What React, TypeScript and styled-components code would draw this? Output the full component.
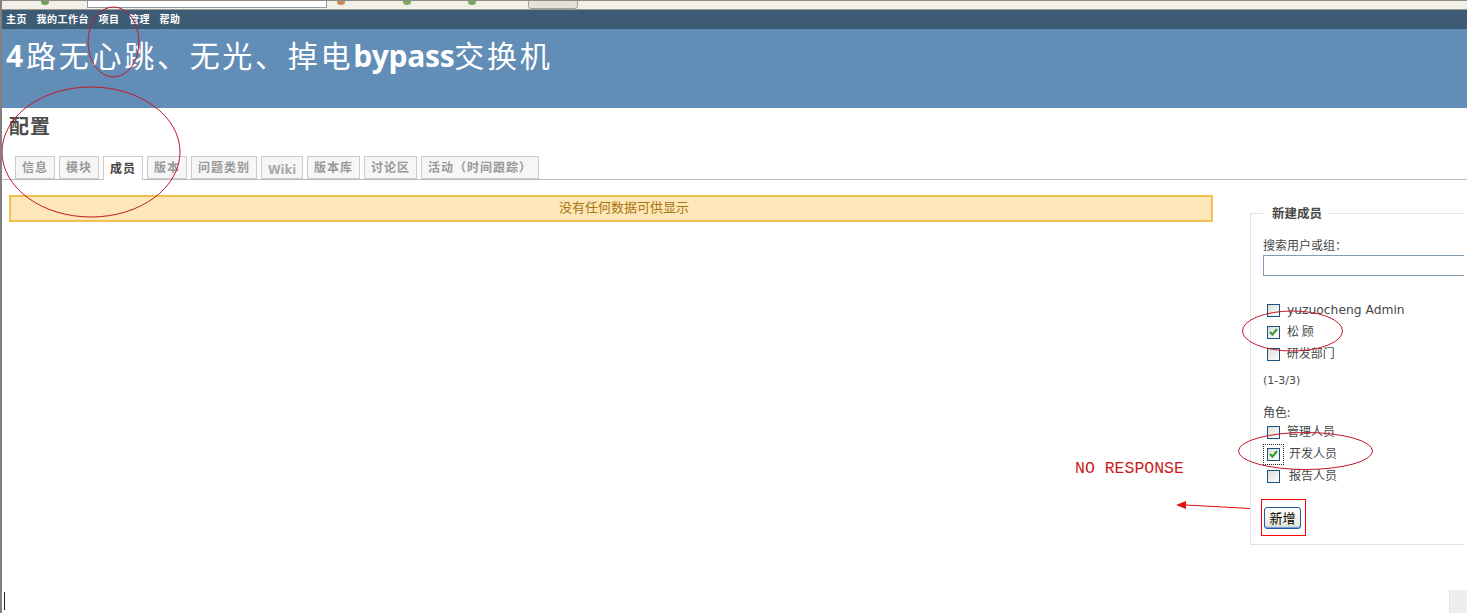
import React from "react";
import styled, { createGlobalStyle } from "styled-components";

const Global = createGlobalStyle`
  html, body { margin: 0; padding: 0; background: #fff; overflow: hidden; }
  body { font-family: "DejaVu Sans", "Noto Sans CJK SC", sans-serif; font-size: 12px; color: #484848; text-spacing-trim: space-all; }
`;

const Page = styled.div`
  position: relative;
  width: 1467px;
  height: 613px;
  overflow: hidden;
  display: flex;
  flex-direction: column;
  background: #fff;
  border-left: 2px solid #808080;
  box-sizing: border-box;
`;

const BrowserStrip = styled.div`
  height: 10px;
  flex: none;
  box-sizing: border-box;
  display: flex;
  align-items: flex-start;
  background: #f1efe6;
  border-top: 1px solid #8d8d8d;
  border-bottom: 1px solid #9a9a94;
  overflow: hidden;
`;

const AddressField = styled.div`
  margin-left: 38px;
  margin-top: -3px;
  width: 240px;
  height: 10px;
  box-sizing: border-box;
  background: #fff;
  border: 1px solid #8f9cab;
`;

const Tool = styled.span<{ $left: number; $color: string }>`
  margin-left: ${(p) => p.$left}px;
  margin-top: -2px;
  width: 8px;
  height: 6px;
  flex: none;
  border-radius: 50%;
  background: ${(p) => p.$color};
`;

const StripTab = styled.div`
  margin-left: 52px;
  margin-top: -3px;
  width: 50px;
  height: 11px;
  box-sizing: border-box;
  background: #e4e1d6;
  border: 1px solid #a5a397;
  border-radius: 3px;
`;

const TopMenu = styled.nav`
  height: 19px;
  flex: none;
  display: flex;
  align-items: center;
  gap: 9.5px;
  padding: 0 0 2px 4px;
  background: #3e5b76;
  box-sizing: border-box;
`;

const MenuItem = styled.a`
  color: #fff;
  font: 700 10px/12px "Noto Sans CJK SC", sans-serif;
  letter-spacing: 0.5px;
`;

const Header = styled.header`
  height: 79px;
  flex: none;
  padding: 6px 0 0 4px;
  box-sizing: border-box;
  background: #628db6;
`;

const Title = styled.h1`
  margin: 0;
  color: #fff;
  font: 400 30px/38px "Noto Sans CJK SC", sans-serif;
  letter-spacing: 2.7px;
`;

const TitleLatin = styled.b<{ $tail: number }>`
  font-family: "Open Sans", sans-serif;
  font-weight: 700;
  letter-spacing: ${(p) => p.$tail}px;
`;

const Content = styled.main`
  flex: 1;
  display: flex;
  flex-direction: column;
  min-height: 0;
`;

const Heading = styled.h2`
  margin: 5px 0 0 7px;
  color: #4d4d4d;
  font: 700 20px/26px "Noto Sans CJK SC", sans-serif;
  letter-spacing: 1px;
`;

const Tabs = styled.div`
  margin-top: 17px;
  height: 24px;
  box-sizing: border-box;
  display: flex;
  gap: 4px;
  padding-left: 13px;
  border-bottom: 1px solid #bbb;
`;

const Tab = styled.a<{ $w: number; $active?: boolean }>`
  width: ${(p) => p.$w}px;
  height: ${(p) => (p.$active ? 24 : 23)}px;
  box-sizing: border-box;
  display: flex;
  align-items: center;
  justify-content: center;
  padding-bottom: 2px;
  background: ${(p) => (p.$active ? "#fff" : "#f6f6f6")};
  border: 1px solid #ccc;
  border-bottom: ${(p) => (p.$active ? "none" : "1px solid #ccc")};
  color: ${(p) => (p.$active ? "#444" : "#999")};
  font: 700 12px/14px "Noto Sans CJK SC", sans-serif;
  letter-spacing: 1px;
  white-space: pre;
`;

const WikiLabel = styled.span`
  color: #aaa;
  font: 700 11.5px "DejaVu Sans", sans-serif;
  letter-spacing: 0;
  padding-top: 6px;
`;

const Row = styled.div`
  flex: 1;
  display: flex;
  align-items: flex-start;
  min-height: 0;
`;

const Notice = styled.div`
  margin: 15px 0 0 7px;
  width: 1204px;
  height: 27px;
  flex: none;
  box-sizing: border-box;
  display: flex;
  align-items: center;
  justify-content: center;
  padding: 0 0 3px 26px;
  background: #fde6b8;
  border: 2px solid #f3c04f;
  color: #a6750c;
  font: 400 13px/14px "Noto Sans CJK SC", sans-serif;
`;

const Box = styled.fieldset`
  margin: 25px 0 0 37px;
  width: 214px;
  height: 340px;
  flex: none;
  box-sizing: border-box;
  padding: 16px 0 0 12px;
  border: 1px solid #e0e4e8;
  border-right: none;
`;

const BoxLegend = styled.legend`
  margin-left: 0;
  padding: 0 6px 0 9px;
  color: #484848;
  font: 700 12.5px/16px "Noto Sans CJK SC", sans-serif;
`;

const FieldLabel = styled.label`
  display: block;
  font: 400 12px/16px "Noto Sans CJK SC", sans-serif;
  color: #484848;
`;

const Search = styled.input`
  display: block;
  margin: 2px 0 0;
  width: 201px;
  height: 21px;
  box-sizing: border-box;
  border: 1px solid #7f9db9;
  border-right: none;
  background: #fff;
  padding: 0;
`;

const List = styled.div<{ $top: number }>`
  margin-top: ${(p) => p.$top}px;
  display: flex;
  flex-direction: column;
`;

const Choice = styled.div`
  height: 22px;
  display: flex;
  align-items: center;
  padding-left: 4px;
`;

const Focus = styled.span<{ $on?: boolean }>`
  display: flex;
  flex: none;
  margin: 0 -4px;
  padding: 4px;
  outline: ${(p) => (p.$on ? "1px dotted #222" : "none")};
  outline-offset: -1px;
`;

const Check = styled.span`
  width: 13px;
  height: 13px;
  box-sizing: border-box;
  flex: none;
  display: flex;
  align-items: center;
  justify-content: center;
  border: 1px solid #1c5180;
  background: linear-gradient(135deg, #dcdcd7, #fff);
`;

const ChoiceText = styled.span<{ $indent: number; $latin?: boolean }>`
  margin-left: ${(p) => p.$indent}px;
  margin-bottom: ${(p) => (p.$latin ? 0 : 2)}px;
  color: #484848;
  white-space: pre;
  font: 400 ${(p) => (p.$latin ? 12.3 : 12)}px/14px ${(p) => (p.$latin ? '"DejaVu Sans", ' : "")}"Noto Sans CJK SC", sans-serif;
`;

const Paging = styled.p`
  margin: 9px 0 0;
  font: 400 11px/14px "DejaVu Sans", sans-serif;
  color: #484848;
`;

const RolesLabel = styled(FieldLabel)`
  margin-top: 16px;
`;

const AddButton = styled.button`
  display: block;
  margin: 20px 0 0 1px;
  width: 37px;
  height: 22px;
  box-sizing: border-box;
  padding: 0;
  border: 1px solid #235a9e;
  border-radius: 3px;
  background: linear-gradient(180deg, #fff, #ece9d8 85%, #b8cce8);
  box-shadow: inset 0 -1px 0 #7aa0d8;
  color: #000;
  font: 400 13px/18px "Noto Sans CJK SC", sans-serif;
`;

const Annotations = styled.svg`
  position: absolute;
  left: -2px;
  top: 0;
  width: 1467px;
  height: 613px;
  pointer-events: none;
`;

const ButtonMark = styled.div`
  position: absolute;
  left: 1259px;
  top: 499px;
  width: 45px;
  height: 37px;
  box-sizing: border-box;
  border: 1px solid #ff0000;
  pointer-events: none;
`;

const NoResponse = styled.div`
  position: absolute;
  left: 1073px;
  top: 459px;
  color: #cc1a1a;
  font: 400 16.5px/20px "Liberation Mono", monospace;
`;

const Corner = styled.div`
  position: absolute;
  right: 0;
  bottom: 0;
  width: 18px;
  height: 23px;
  box-sizing: border-box;
  background: #eeeeee;
  border-left: 1px solid #e4e4e4;
`;

const Caret = styled.div`
  position: absolute;
  left: 2px;
  bottom: 3px;
  width: 1px;
  height: 18px;
  background: #222;
`;

const Tick = () => (
  <svg width="9" height="8" viewBox="0 0 9 8">
    <path d="M1 4l2.4 2.6L8 1" fill="none" stroke="#2f9a2f" strokeWidth="2" />
  </svg>
);

const tabs: [string, number][] = [
  ["信息", 40], ["模块", 40], ["成员", 40], ["版本", 40], ["问题类别", 66],
];
const tabsAfter: [string, number][] = [
  ["版本库", 53], ["讨论区", 53], ["活动（时间跟踪）", 118],
];

const Option = ({ on, focus, text, indent, latin }: { on?: boolean; focus?: boolean; text: string; indent: number; latin?: boolean }) => (
  <Choice>
    <Focus $on={focus}><Check>{on ? <Tick /> : null}</Check></Focus>
    <ChoiceText $indent={indent} $latin={latin}>{text}</ChoiceText>
  </Choice>
);

export default function App() {
  return (
    <Page>
      <Global />
      <BrowserStrip>
        <Tool $left={39} $color="#6f9f55" />
        <AddressField />
        <Tool $left={10} $color="#c98a55" />
        <Tool $left={58} $color="#7faa5e" />
        <Tool $left={57} $color="#79a860" />
        <StripTab />
      </BrowserStrip>
      <TopMenu>
        <MenuItem>主页</MenuItem>
        <MenuItem>我的工作台</MenuItem>
        <MenuItem>项目</MenuItem>
        <MenuItem>管理</MenuItem>
        <MenuItem>帮助</MenuItem>
      </TopMenu>
      <Header>
        <Title><TitleLatin $tail={3}>4</TitleLatin>路无心跳、无光、掉电<TitleLatin $tail={-0.3}>bypass</TitleLatin>交换机</Title>
      </Header>
      <Content>
        <Heading>配置</Heading>
        <Tabs>
          {tabs.map(([t, w]) => <Tab key={t} $w={w} $active={t === "成员"}>{t}</Tab>)}
          <Tab $w={42}><WikiLabel>Wiki</WikiLabel></Tab>
          {tabsAfter.map(([t, w]) => <Tab key={t} $w={w}>{t}</Tab>)}
        </Tabs>
        <Row>
          <Notice>没有任何数据可供显示</Notice>
          <Box>
            <BoxLegend>新建成员</BoxLegend>
            <FieldLabel>搜索用户或组：</FieldLabel>
            <Search />
            <List $top={23}>
              <Option text="yuzuocheng Admin" indent={7} latin />
              <Option on text="松 顾" indent={7} />
              <Option text=" 研发部门" indent={4} />
            </List>
            <Paging>(1-3/3)</Paging>
            <RolesLabel>角色:</RolesLabel>
            <List $top={1}>
              <Option text="管理人员" indent={7} />
              <Option on focus text="开发人员" indent={9} />
              <Option text="报告人员" indent={9} />
            </List>
            <AddButton>新增</AddButton>
          </Box>
        </Row>
      </Content>
      <Annotations viewBox="0 0 1467 613">
        <g fill="none" stroke="#c2182a" strokeWidth="1">
          <ellipse cx="113.5" cy="42" rx="25.5" ry="35" />
          <ellipse cx="91" cy="152" rx="89" ry="65" />
          <ellipse cx="1292.5" cy="331" rx="50" ry="20" />
          <ellipse cx="1305.5" cy="451" rx="67" ry="18.5" />
        </g>
        <path d="M1250 508.5L1186 505" fill="none" stroke="#e01010" strokeWidth="1.2" />
        <path d="M1176 505L1186 501V509Z" fill="#e01010" />
      </Annotations>
      <ButtonMark />
      <NoResponse>NO RESPONSE</NoResponse>
      <Corner />
      <Caret />
    </Page>
  );
}
